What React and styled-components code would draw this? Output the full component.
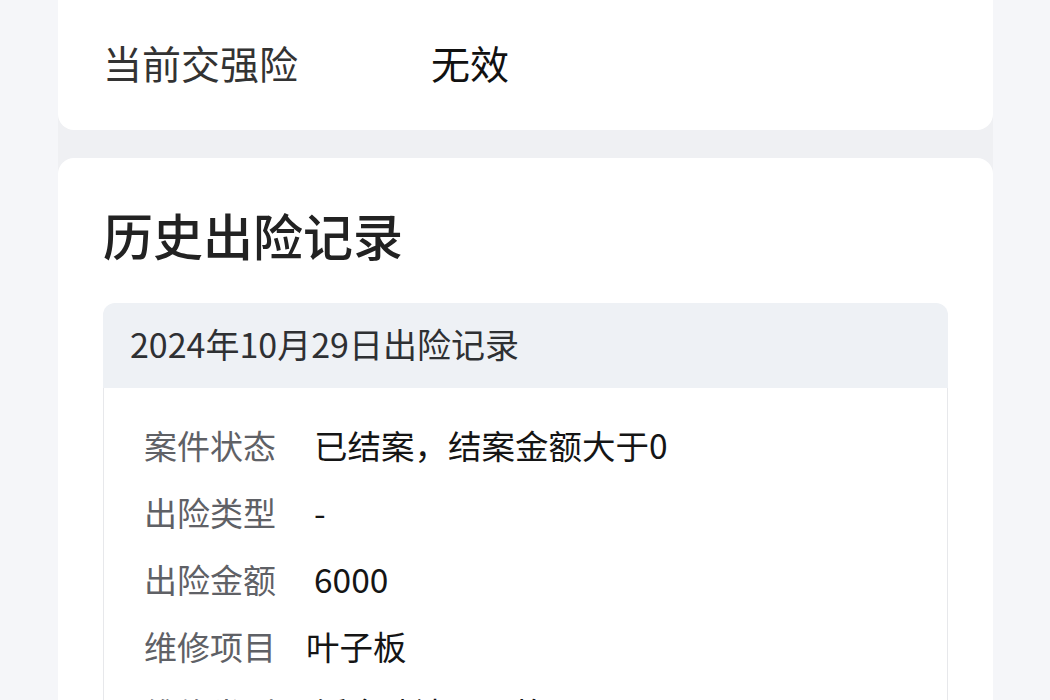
import React from "react";
import styled, { createGlobalStyle } from "styled-components";

const Global = createGlobalStyle`
  html, body { margin: 0; padding: 0; background: #f5f6f9; }
  body { font-family: "Noto Sans CJK SC", "Noto Sans", sans-serif; overflow: hidden; }
`;

const Page = styled.div`
  width: 935px;
  margin: 0 auto 0 58px;
  background: #eff0f3;
  display: flex;
  flex-direction: column;
  gap: 28px;
  min-height: 700px;
`;

const Card = styled.section`
  background: #ffffff;
  border-radius: ${(p) => (p.$cut ? "0 0 16px 16px" : "16px")};
  padding: ${(p) => p.$pad};
`;

const InfoRow = styled.div`
  display: flex;
  align-items: center;
  font-size: 39px;
  line-height: 50px;
`;

const InfoLabel = styled.span`
  width: 328px;
  color: #333333;
`;

const InfoValue = styled.span`
  color: #111111;
`;

const Title = styled.h2`
  margin: 0 0 39px;
  font-size: 50px;
  line-height: 60px;
  font-weight: 500;
  color: #222222;
`;

const Record = styled.div`
  border-radius: 12px 12px 0 0;
  overflow: hidden;
`;

const RecordHead = styled.div`
  background: #eef1f5;
  height: 85px;
  padding: 0 27px 5px;
  box-sizing: border-box;
  display: flex;
  align-items: center;
  font-size: 34px;
  color: #2e3033;
`;

const RecordBody = styled.div`
  border: 1.5px solid #e7e8eb;
  border-top: none;
  padding: 35px 42px 40px 40px;
  display: flex;
  flex-direction: column;
  gap: 23px;
`;

const Row = styled.div`
  display: flex;
  align-items: center;
  font-size: 33px;
  line-height: 44px;
`;

const Label = styled.span`
  width: 170px;
  flex: none;
  color: #5f6166;
`;

const Value = styled.span`
  color: #151515;
  font-size: 33.5px;
  margin-left: ${(p) => p.$shift || 0}px;
`;

const rows = [
  ["案件状态", "已结案，结案金额大于0"],
  ["出险类型", "-"],
  ["出险金额", "6000"],
  ["维修项目", "叶子板", -8],
  ["维修类型", "钣金喷漆，更换"],
];

export default function App() {
  return (
    <>
      <Global />
      <Page>
        <Card $cut $pad="37px 45px 43px">
          <InfoRow>
            <InfoLabel>当前交强险</InfoLabel>
            <InfoValue>无效</InfoValue>
          </InfoRow>
        </Card>
        <Card $pad="46px 45px 40px">
          <Title>历史出险记录</Title>
          <Record>
            <RecordHead>2024年10月29日出险记录</RecordHead>
            <RecordBody>
              {rows.map(([l, v, s]) => (
                <Row key={l}>
                  <Label>{l}</Label>
                  <Value $shift={s}>{v}</Value>
                </Row>
              ))}
            </RecordBody>
          </Record>
        </Card>
      </Page>
    </>
  );
}
